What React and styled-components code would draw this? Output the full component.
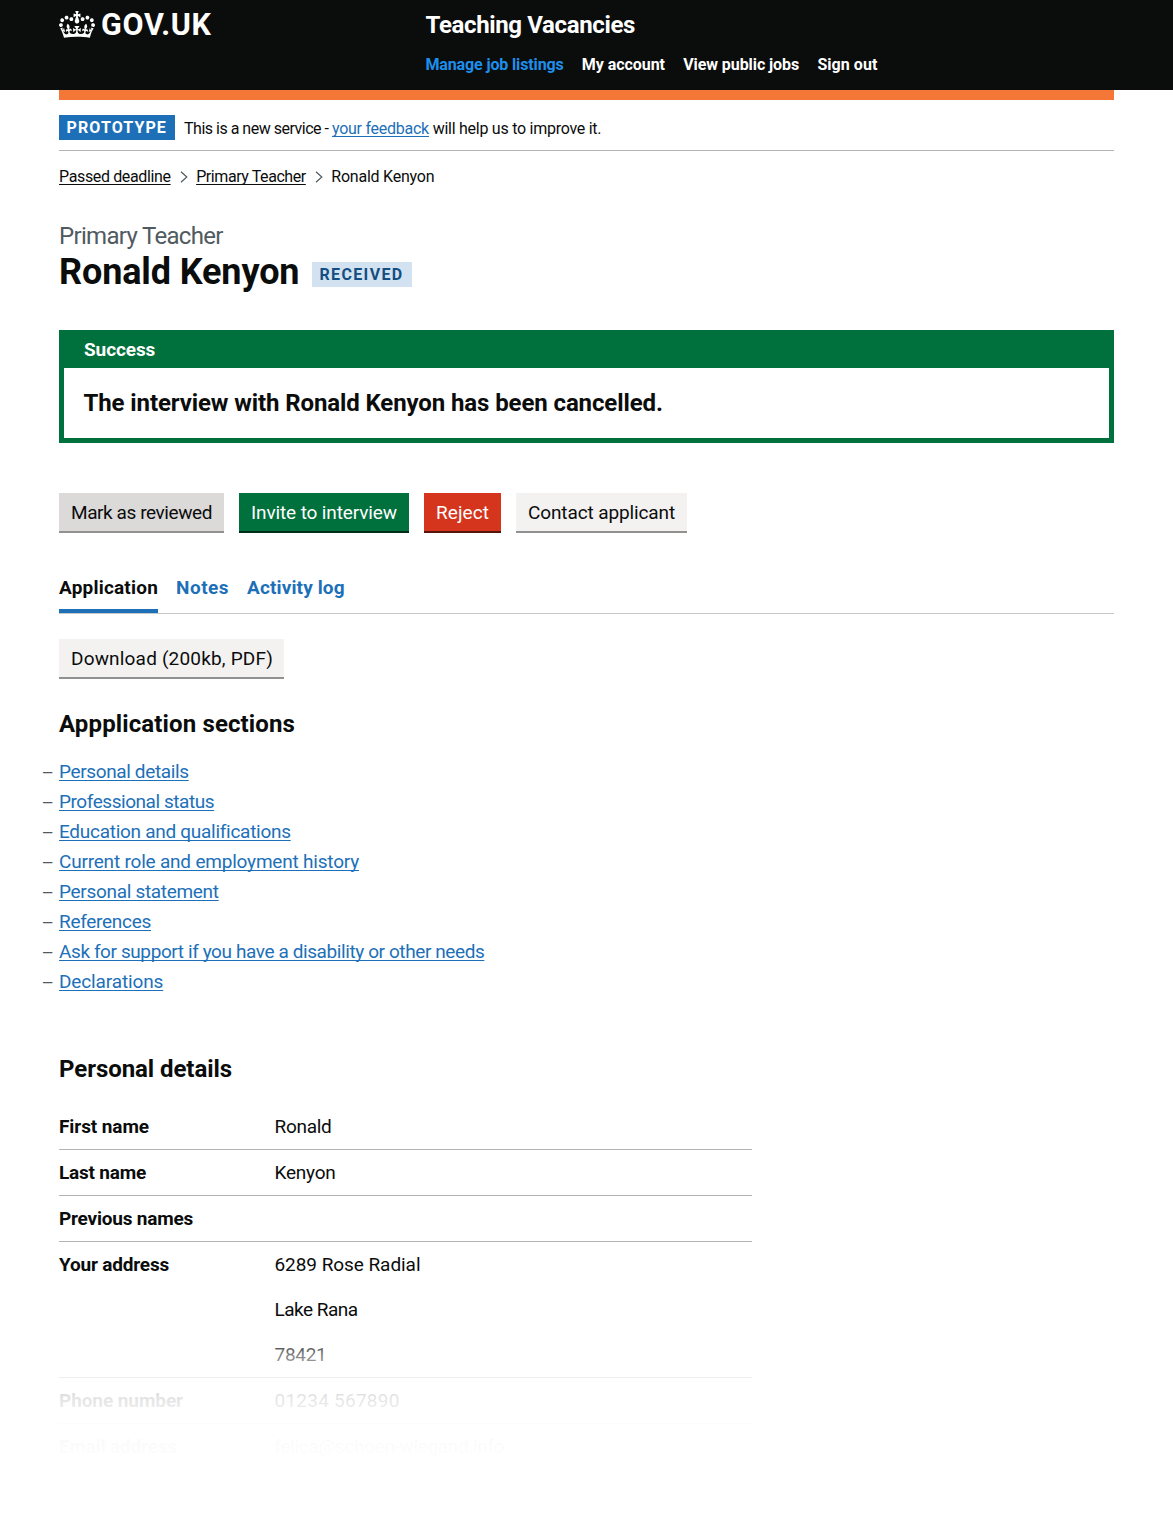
import React from 'react';
import styled, { createGlobalStyle, css } from 'styled-components';

const c = {
  ink: '#0b0c0c',
  blue: '#1d70b8',
  green: '#00703c',
  grey: '#505a5f',
  line: '#b1b4b6',
};

const Global = createGlobalStyle`
  * { box-sizing: border-box; }
  body {
    margin: 0;
    background: #fff;
    color: ${c.ink};
    font-family: Roboto, "Liberation Sans", sans-serif;
    font-size: 19px;
    line-height: 25px;
  }
  h1, h2, p, ul, dl, dt, dd { margin: 0; padding: 0; }
`;

const tracking = css`
  letter-spacing: ${(p) => p.$track || 0}px;
  white-space: nowrap;
`;

const Page = styled.div`
  position: relative;
  height: 1531px;
  overflow: hidden;
`;
const Container = styled.div`
  margin: 0 59px;
`;

const Header = styled.header`
  height: 90px;
  background: ${c.ink};
  color: #fff;
`;
const HeaderInner = styled(Container)`
  display: grid;
  grid-template-columns: 366.5px 1fr;
  padding-top: 10px;
`;
const Logo = styled.div`
  display: flex;
  align-items: flex-start;
  gap: 6px;
`;
const Crown = styled.svg`
  display: block;
  width: 36px;
  height: 27px;
  margin-top: 0.5px;
  fill: #fff;
`;
const LogoText = styled.span`
  font-size: 30.5px;
  line-height: 30px;
  font-weight: 700;
  ${tracking}
`;
const ServiceName = styled.div`
  font-size: 24px;
  line-height: 30px;
  font-weight: 700;
  ${tracking}
`;
const Nav = styled.nav`
  display: flex;
  gap: 18.3px;
  margin-top: 15px;
  font-size: 16px;
  line-height: 20px;
  font-weight: 700;
`;
const NavItem = styled.span`
  color: ${(p) => (p.$active ? '#1d8feb' : '#fff')};
  ${tracking}
`;
const Bar = styled.div`
  height: 10px;
  background: #f47738;
`;

const PhaseBanner = styled.div`
  display: flex;
  align-items: flex-start;
  height: 51px;
  padding-top: 15px;
  border-bottom: 1px solid ${c.line};
  font-size: 16px;
`;
const Tag = styled.strong`
  display: inline-block;
  width: ${(p) => p.$width}px;
  height: 25px;
  padding-left: 7.5px;
  font-size: 16px;
  line-height: 25px;
  font-weight: 700;
  color: ${(p) => (p.$tint ? '#144e81' : '#fff')};
  background: ${(p) => (p.$tint ? '#d2e2f1' : c.blue)};
  ${tracking}
`;
const PhaseText = styled.p`
  margin-left: 9px;
  display: flex;
  line-height: 27px;
`;
const Piece = styled.span`
  width: ${(p) => (p.$width ? `${p.$width}px` : 'auto')};
  ${tracking}
`;
const Link = styled.a`
  color: ${(p) => (p.$dark ? c.ink : c.blue)};
  text-decoration: underline;
  text-decoration-thickness: 1px;
  text-decoration-skip-ink: none;
  text-underline-offset: 1.5px;
  ${tracking}
`;

const Crumbs = styled.div`
  display: flex;
  align-items: center;
  margin-top: 15px;
  font-size: 16px;
  line-height: 21px;
`;
const Chevron = styled.svg`
  width: 8px;
  height: 12px;
  margin: 0 8.5px 0 9px;
  fill: none;
  stroke: ${c.grey};
  stroke-width: 1.2;
`;

const Caption = styled.p`
  margin-top: 34px;
  font-size: 24px;
  line-height: 30px;
  color: ${c.grey};
  ${tracking}
`;
const TitleRow = styled.div`
  display: flex;
  gap: 13px;
  height: 40px;
  align-items: flex-end;
  padding-bottom: 4px;
`;
const Title = styled.h1`
  margin-bottom: -5px;
  width: 240px;
  font-size: 36px;
  line-height: 40px;
  font-weight: 700;
  ${tracking}
`;

const Notice = styled.section`
  margin-top: 39px;
  border: 5px solid ${c.green};
`;
const NoticeHead = styled.div`
  padding: 2px 20px 6px;
  background: ${c.green};
  color: #fff;
  font-weight: 700;
  ${tracking}
`;
const NoticeBody = styled.div`
  padding: 20px 19.5px;
`;

const Heading = styled.h2`
  margin-top: ${(p) => p.$top || 0}px;
  font-size: 24px;
  line-height: 30px;
  font-weight: 700;
  ${tracking}
`;

const tones = {
  hover: ['#dbdad9', '#929191', c.ink],
  primary: [c.green, '#002d18', '#fff'],
  warning: ['#d4351c', '#55150b', '#fff'],
  secondary: ['#f3f2f1', '#929191', c.ink],
};
const Actions = styled.div`
  display: flex;
  gap: 15px;
  margin-top: ${(p) => p.$top}px;
`;
const Button = styled.button`
  width: ${(p) => p.$width}px;
  height: 40px;
  padding: 7px 0 6px 12px;
  border: 0;
  border-bottom: 2px solid ${(p) => tones[p.$tone][1]};
  border-radius: 0;
  background: ${(p) => tones[p.$tone][0]};
  color: ${(p) => tones[p.$tone][2]};
  font: inherit;
  text-align: left;
  ${tracking}
`;

const Tabs = styled.nav`
  display: flex;
  gap: 18px;
  height: 39px;
  margin-top: 42px;
  border-bottom: 1px solid #c5c7c8;
  font-weight: 700;
`;
const Tab = styled.span`
  height: 38px;
  color: ${(p) => (p.$active ? c.ink : c.blue)};
  border-bottom: ${(p) => (p.$active ? `4px solid ${c.blue}` : '0')};
  ${tracking}
`;

const Sections = styled.ul`
  margin-top: 20px;
  list-style: none;
`;
const SectionItem = styled.li`
  display: flex;
  height: 25px;
  margin: 0 0 5px -17.5px;
  &::before {
    content: '–';
    flex: 0 0 17.5px;
    padding-top: 1px;
    color: ${c.grey};
  }
`;

const Summary = styled.dl`
  width: 693px;
  margin-top: 20px;
`;
const Row = styled.div`
  display: grid;
  grid-template-columns: 215.5px 1fr;
  padding: 10px 0;
  border-bottom: 1px solid ${c.line};
`;
const Key = styled.dt`
  font-weight: 700;
  ${tracking}
`;
const Value = styled.dd`
  display: flex;
  flex-direction: column;
  gap: 20px;
`;
const Fade = styled.div`
  position: absolute;
  inset: 1320px 0 0;
  pointer-events: none;
  background: linear-gradient(
    rgba(255, 255, 255, 0) 8px,
    rgba(255, 255, 255, 0.3) 27px,
    rgba(255, 255, 255, 0.5) 36px,
    rgba(255, 255, 255, 0.76) 57px,
    rgba(255, 255, 255, 0.89) 78px,
    rgba(255, 255, 255, 0.965) 103px,
    rgba(255, 255, 255, 0.985) 126px,
    #fff 150px
  );
`;

const sections = [
  ['Personal details', -0.37],
  ['Professional status', -0.45],
  ['Education and qualifications', -0.28],
  ['Current role and employment history', -0.2],
  ['Personal statement', -0.31],
  ['References', -0.29],
  ['Ask for support if you have a disability or other needs', -0.405],
  ['Declarations', -0.13],
];

const details = [
  ['First name', -0.09, [['Ronald', -0.28]]],
  ['Last name', -0.21, [['Kenyon', -0.24]]],
  ['Previous names', -0.21, []],
  ['Your address', -0.19, [['6289 Rose Radial', -0.06], ['Lake Rana', -0.52], ['78421', -0.28]]],
  ['Phone number', -0.08, [['01234 567890', 0.24]]],
  ['Email address', -0.17, [['felica@schoen-wiegand.info', -0.35]]],
];

function Separator() {
  return (
    <Chevron viewBox="0 0 8 12" aria-hidden="true">
      <path d="M1 .7l5.8 5.3L1 11.3" />
    </Chevron>
  );
}

export default function App() {
  return (
    <Page>
      <Global />
      <Header>
        <HeaderInner>
          <Logo>
            <Crown viewBox="0 0 132 97" preserveAspectRatio="none" aria-hidden="true">
              <path
                fillRule="evenodd"
                d="M25 30.2c3.5 1.5 7.7-.2 9.1-3.7 1.5-3.6-.2-7.8-3.9-9.2-3.6-1.4-7.6.3-9.1 3.9-1.4 3.5.3 7.5 3.9 9zM9 39.5c3.6 1.5 7.8-.2 9.2-3.7 1.5-3.6-.2-7.8-3.9-9.1-3.6-1.5-7.6.2-9.1 3.8-1.4 3.5.3 7.5 3.8 9zM4.4 57.2c3.5 1.5 7.7-.2 9.1-3.8 1.5-3.6-.2-7.7-3.9-9.1-3.5-1.5-7.6.3-9.1 3.8-1.4 3.5.3 7.6 3.9 9.1zm38.3-21.4c3.5 1.5 7.7-.2 9.1-3.8 1.5-3.6-.2-7.7-3.9-9.1-3.6-1.5-7.6.3-9.1 3.8-1.3 3.6.4 7.7 3.9 9.1zm64.4-5.6c-3.6 1.5-7.8-.2-9.1-3.7-1.5-3.6.2-7.8 3.8-9.2 3.6-1.4 7.7.3 9.2 3.9 1.3 3.5-.4 7.5-3.9 9zm15.9 9.3c-3.6 1.5-7.7-.2-9.1-3.7-1.5-3.6.2-7.8 3.7-9.1 3.6-1.5 7.7.2 9.2 3.8 1.5 3.5-.3 7.5-3.8 9zm4.7 17.7c-3.6 1.5-7.8-.2-9.2-3.8-1.5-3.6.2-7.7 3.9-9.1 3.6-1.5 7.7.3 9.2 3.8 1.3 3.5-.4 7.6-3.9 9.1zM89.3 35.8c-3.6 1.5-7.8-.2-9.2-3.8-1.4-3.6.2-7.7 3.9-9.1 3.6-1.5 7.7.3 9.2 3.8 1.4 3.6-.3 7.7-3.9 9.1zM69.7 17.7l8.9 4.7V9.3l-8.9 2.8c-.2-.3-.5-.6-.9-.9L72.4 0H59.6l3.5 11.2c-.3.3-.6.5-.9.9l-8.8-2.8v13.1l8.8-4.7c.3.3.6.7.9.9l-5 15.4v.1c-.2.8-.4 1.6-.4 2.4 0 4.1 3.1 7.5 7 8.1h.2c.3 0 .7.1 1 .1.4 0 .7 0 1-.1h.2c4-.6 7.1-4.1 7.1-8.1 0-.8-.1-1.7-.4-2.4V34l-5.1-15.4c.4-.2.7-.6 1-.9zM66 92.8c16.9 0 32.8 1.1 47.1 3.2 4-16.9 8.9-26.7 14-33.5l-9.6-3.4c1 4.9 1.1 7.2 0 10.2-1.5-1.4-3-4.3-4.2-8.7L108.6 76c2.8-2 5-3.2 7.5-3.3-4.4 9.4-10 11.9-13.6 11.2-4.3-.8-6.3-4.6-5.6-7.9 1-4.7 5.7-5.9 8-.5 4.3-8.7-3-11.4-7.6-8.8 7.1-7.2 7.9-13.5 2.1-21.1-8 6.1-8.1 12.3-4.5 20.8-4.7-5.4-12.1-2.5-9.5 6.2 3.4-5.2 7.9-2 7.2 3.1-.6 4.3-6.4 7.8-13.5 7.2-10.3-.9-10.9-8-11.2-13.8 2.5-.5 7.1 1.8 11 7.3L80.2 60c-4.1 4.4-8 5.3-12.3 5.4 1.4-4.4 8-11.6 8-11.6H55.5s6.4 7.2 7.9 11.6c-4.2-.1-8-1-12.3-5.4l1.4 16.4c3.9-5.5 8.5-7.7 10.9-7.3-.3 5.8-.9 12.8-11.1 13.8-7.2.6-12.9-2.9-13.5-7.2-.7-5 3.8-8.3 7.1-3.1 2.7-8.7-4.6-11.6-9.4-6.2 3.7-8.5 3.6-14.7-4.6-20.8-5.8 7.6-5 13.9 2.2 21.1-4.7-2.6-11.9.1-7.7 8.8 2.3-5.5 7.1-4.2 8.1.5.7 3.3-1.3 7.1-5.7 7.9-3.5.7-9-1.8-13.5-11.2 2.5.1 4.7 1.3 7.5 3.3l-4.7-15.4c-1.2 4.4-2.7 7.2-4.3 8.7-1.1-3-.9-5.3 0-10.2l-9.5 3.4c5 6.9 9.9 16.7 14 33.5 14.8-2.1 30.8-3.2 47.7-3.2z"
              />
            </Crown>
            <LogoText $track={0.7}>GOV.UK</LogoText>
          </Logo>
          <div>
            <ServiceName $track={-0.36}>Teaching Vacancies</ServiceName>
            <Nav>
              <NavItem $active $track={-0.14}>Manage job listings</NavItem>
              <NavItem $track={-0.06}>My account</NavItem>
              <NavItem $track={-0.08}>View public jobs</NavItem>
              <NavItem $track={0.05}>Sign out</NavItem>
            </Nav>
          </div>
        </HeaderInner>
      </Header>
      <Container>
        <Bar />
        <PhaseBanner>
          <Tag $width={116} $track={1.1}>PROTOTYPE</Tag>
          <PhaseText>
            <Piece $width={148} $track={-0.49}>This is a new service -</Piece>
            <Link href="#" $track={-0.26}>your feedback</Link>
            <Piece $track={-0.26}>&nbsp;will help us to improve it.</Piece>
          </PhaseText>
        </PhaseBanner>
        <Crumbs>
          <Link href="#" $dark $track={-0.36}>Passed deadline</Link>
          <Separator />
          <Link href="#" $dark $track={-0.42}>Primary Teacher</Link>
          <Separator />
          <Piece $track={-0.23}>Ronald Kenyon</Piece>
        </Crumbs>

        <Caption $track={-0.68}>Primary Teacher</Caption>
        <TitleRow>
          <Title $track={-0.12}>Ronald Kenyon</Title>
          <Tag $tint $width={100} $track={1.35}>RECEIVED</Tag>
        </TitleRow>

        <Notice>
          <NoticeHead $track={-0.1}>Success</NoticeHead>
          <NoticeBody>
            <Heading as="p" $track={-0.105}>
              The interview with Ronald Kenyon has been cancelled.
            </Heading>
          </NoticeBody>
        </Notice>

        <Actions $top={50}>
          <Button $tone="hover" $width={165} $track={-0.42}>Mark as reviewed</Button>
          <Button $tone="primary" $width={170} $track={-0.12}>Invite to interview</Button>
          <Button $tone="warning" $width={77} $track={0.07}>Reject</Button>
          <Button $tone="secondary" $width={171} $track={-0.12}>Contact applicant</Button>
        </Actions>

        <Tabs>
          <Tab $active $track={0.2}>Application</Tab>
          <Tab $track={0.5}>Notes</Tab>
          <Tab $track={0.12}>Activity log</Tab>
        </Tabs>

        <Actions $top={25}>
          <Button $tone="secondary" $width={225} $track={0.18}>Download (200kb, PDF)</Button>
        </Actions>

        <Heading $top={30} $track={0.13}>Appplication sections</Heading>
        <Sections>
          {sections.map(([label, track]) => (
            <SectionItem key={label}>
              <Link href="#" $track={track}>{label}</Link>
            </SectionItem>
          ))}
        </Sections>

        <Heading $top={60} $track={-0.06}>Personal details</Heading>
        <Summary>
          {details.map(([label, track, values]) => (
            <Row key={label}>
              <Key $track={track}>{label}</Key>
              <Value>
                {values.map(([text, t]) => (
                  <Piece key={text} $track={t}>{text}</Piece>
                ))}
              </Value>
            </Row>
          ))}
        </Summary>
      </Container>
      <Fade />
    </Page>
  );
}
